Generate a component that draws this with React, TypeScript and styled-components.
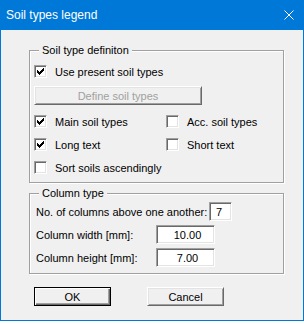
import React from 'react';
import styled, { createGlobalStyle } from 'styled-components';

const GlobalStyle = createGlobalStyle`
  html, body {
    margin: 0;
    padding: 0;
    background: #ffffff;
  }
  body {
    font-family: "Liberation Sans", Arial, sans-serif;
    font-size: 11px;
    color: #000000;
  }
`;

const Window = styled.div`
  width: 304px;
  height: 321px;
  box-sizing: border-box;
  border: 1px solid #0078d7;
  border-top: none;
  background: #f0f0f0;
  display: flex;
  flex-direction: column;
`;

const TitleBar = styled.div`
  height: 29px;
  margin: 0 -1px;
  background: #0078d7;
  color: #ffffff;
  display: flex;
  align-items: center;
  justify-content: space-between;
  padding: 0 10px 1px 6px;
  font-size: 12px;
`;

const CloseIcon = styled.svg`
  width: 10px;
  height: 10px;
  display: block;
`;

const Body = styled.div`
  flex: 1;
  padding: 20px 0 0 28px;
  display: flex;
  flex-direction: column;
`;

const Group = styled.div<{ $height: number; $mt?: number; $pt?: number }>`
  position: relative;
  width: 255px;
  height: ${(p) => p.$height}px;
  margin-top: ${(p) => p.$mt ?? 0}px;
  box-sizing: border-box;
  border: 1px solid #a0a0a0;
  box-shadow: 1px 1px 0 #ffffff, inset 1px 1px 0 #ffffff;
  padding: ${(p) => p.$pt ?? 14}px 0 0 4px;
  display: flex;
  flex-direction: column;
`;

const Legend = styled.span`
  position: absolute;
  left: 9px;
  top: -8px;
  padding: 0 3px 0 3px;
  background: #f0f0f0;
  line-height: 14px;
`;

const Row = styled.div<{ $mt?: number; $h?: number }>`
  display: flex;
  align-items: center;
  margin-top: ${(p) => p.$mt ?? 0}px;
  height: ${(p) => p.$h ?? 13}px;
`;

const Grid = styled.div<{ $mt?: number }>`
  display: grid;
  grid-template-columns: 132px 1fr;
  row-gap: 10px;
  margin-top: ${(p) => p.$mt ?? 0}px;
`;

const CheckLabel = styled.label`
  display: flex;
  align-items: center;
  height: 13px;
  gap: 8px;
  white-space: nowrap;
`;

const Box = styled.span`
  width: 13px;
  height: 13px;
  box-sizing: border-box;
  background: #ffffff;
  border: 1px solid;
  border-color: #a0a0a0 #ffffff #ffffff #a0a0a0;
  box-shadow: inset 1px 1px 0 #696969, inset -1px -1px 0 #e3e3e3;
  display: flex;
  align-items: center;
  justify-content: center;
  flex: none;
`;

const Tick = styled.svg`
  width: 7px;
  height: 7px;
  display: block;
  shape-rendering: crispEdges;
`;

const Button = styled.div<{ $disabled?: boolean; $default?: boolean; $width: number }>`
  width: ${(p) => p.$width}px;
  height: 19px;
  box-sizing: border-box;
  background: #f0f0f0;
  display: flex;
  align-items: center;
  justify-content: center;
  color: ${(p) => (p.$disabled ? '#a0a0a0' : '#000000')};
  border: 1px solid;
  border-color: ${(p) => (p.$default ? '#000000' : '#ffffff #696969 #696969 #ffffff')};
  box-shadow: ${(p) =>
    p.$default
      ? 'inset 1px 1px 0 #ffffff, inset -1px -1px 0 #696969, inset -2px -2px 0 #a0a0a0'
      : 'inset 1px 1px 0 #e3e3e3, inset -1px -1px 0 #a0a0a0'};
`;

const FieldRow = styled.div<{ $mt?: number }>`
  display: flex;
  align-items: center;
  margin-top: ${(p) => p.$mt ?? 0}px;
  height: 19px;
`;

const FieldLabel = styled.span<{ $width: number }>`
  width: ${(p) => p.$width}px;
  padding-left: 2px;
  white-space: nowrap;
`;

const Field = styled.div<{ $width: number; $align?: string }>`
  width: ${(p) => p.$width}px;
  height: 19px;
  box-sizing: border-box;
  background: #ffffff;
  border: 1px solid;
  border-color: #a0a0a0 #ffffff #ffffff #a0a0a0;
  box-shadow: inset 1px 1px 0 #696969, inset -1px -1px 0 #e3e3e3;
  display: flex;
  align-items: center;
  justify-content: ${(p) => p.$align ?? 'center'};
  padding: 0 2px 0 6px;
`;

const ButtonBar = styled.div`
  display: flex;
  gap: 36px;
  margin-top: 13px;
  padding-left: 5px;
`;

const Check: React.FC<{ checked?: boolean; label: string }> = ({ checked, label }) => (
  <CheckLabel>
    <Box>
      {checked && (
        <Tick viewBox="0 0 7 7">
          <path d="M0 2h1v1h1v1h1v-1h1v-1h1v-1h1v-1h1v3h-1v1h-1v1h-1v1h-1v1h-1v-1h-1v-1h-1z" fill="#000" />
        </Tick>
      )}
    </Box>
    <span>{label}</span>
  </CheckLabel>
);

export default function App() {
  return (
    <>
      <GlobalStyle />
      <Window>
        <TitleBar>
          <span>Soil types legend</span>
          <CloseIcon viewBox="0 0 10 10">
            <path d="M0.5 0.5L9.5 9.5M9.5 0.5L0.5 9.5" stroke="#fff" strokeWidth="1" />
          </CloseIcon>
        </TitleBar>
        <Body>
          <Group $height={133}>
            <Legend>Soil type definiton</Legend>
            <Row>
              <Check checked label="Use present soil types" />
            </Row>
            <Row $mt={8} $h={19}>
              <Button $disabled $width={168}>Define soil types</Button>
            </Row>
            <Grid $mt={10}>
              <Check checked label="Main soil types" />
              <Check label="Acc. soil types" />
              <Check checked label="Long text" />
              <Check label="Short text" />
              <Check label="Sort soils ascendingly" />
            </Grid>
          </Group>
          <Group $height={81} $mt={10} $pt={8}>
            <Legend>Column type</Legend>
            <FieldRow>
              <FieldLabel $width={173}>No. of columns above one another:</FieldLabel>
              <Field $width={23} $align="flex-start">7</Field>
            </FieldRow>
            <FieldRow $mt={4}>
              <FieldLabel $width={120}>Column width [mm]:</FieldLabel>
              <Field $width={59}>10.00</Field>
            </FieldRow>
            <FieldRow $mt={4}>
              <FieldLabel $width={120}>Column height [mm]:</FieldLabel>
              <Field $width={59}>7.00</Field>
            </FieldRow>
          </Group>
          <ButtonBar>
            <Button $default $width={77}>OK</Button>
            <Button $width={77}>Cancel</Button>
          </ButtonBar>
        </Body>
      </Window>
    </>
  );
}
